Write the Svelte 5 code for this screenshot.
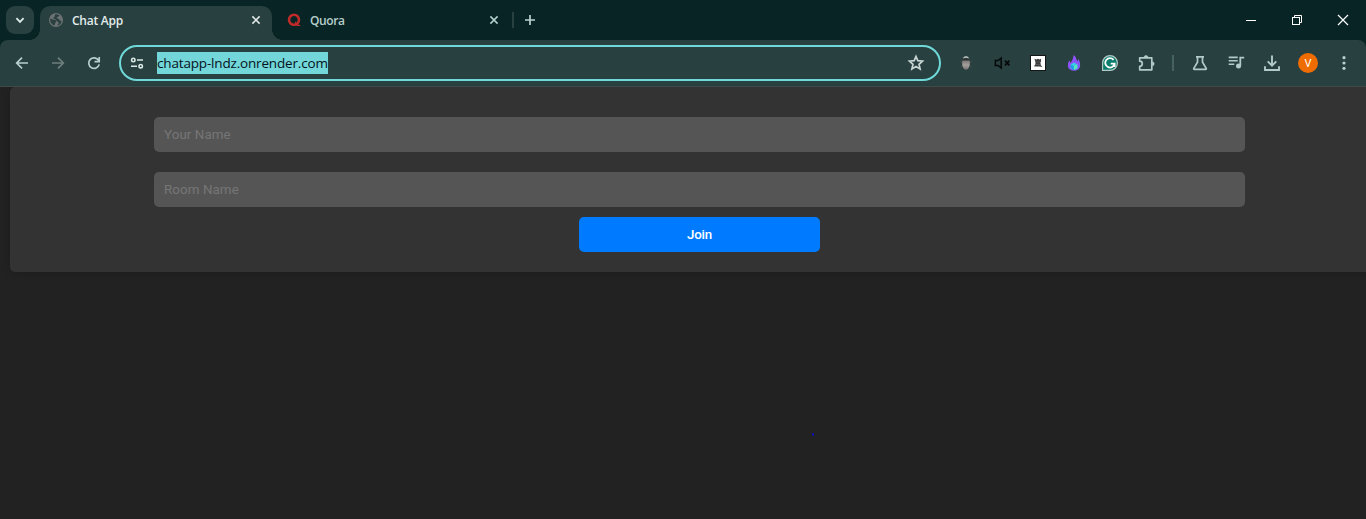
<script>
  const controls = ['min', 'restore', 'close'];
</script>

<div class="window">
  <div class="strip">
    <button class="search" aria-label="Search tabs">
      <svg viewBox="-14 -14 28 28" width="28" height="28"><path d="M-3.6 -1.8L0 1.8L3.6 -1.8" fill="none" stroke="#d9e9e7" stroke-width="1.9" /></svg>
    </button>
    <div class="tab active">
      <svg class="fav" viewBox="-8 -8 16 16" width="16" height="16">
        <circle r="7" fill="#6b7173" />
        <path d="M-5.7 -1.2C-3.8 -1.5 -3 0 -1.2 .1C.5 .2 .8 1.5 -.2 2.2C-1.1 2.9 -.7 4 -1.6 5.4C-4.4 4.8 -6.2 1.8 -5.7 -1.2ZM-1 -5.7C1 -6 2.6 -5.3 3.6 -4.5C2.8 -4.2 2.8 -3 1.4 -2.9C.1 -2.8 .7 -1.4 2 -1.3C3.3 -1.2 3.2 .4 4.2 .6C5 .8 5.3 1.3 5.5 1.7C4.8 4 3.3 5.2 1.4 5.6C1.6 4.4 3.2 3.9 2.6 2.5C2.1 1.4 1 1.3 .3 .2C-.5 -1 -2.1 -.6 -2.5 -1.7C-2.8 -2.8 -1.2 -3 -1.1 -4Z" fill="#2a4040" />
      </svg>
      <span class="title bold">Chat App</span>
      <svg class="x" viewBox="-8 -8 16 16" width="16" height="16"><path d="M-3.6 -3.6L3.6 3.6M3.6 -3.6L-3.6 3.6" stroke="#e3eceb" stroke-width="1.5" /></svg>
    </div>
    <div class="tab second">
      <svg class="fav" viewBox="-8 -8 16 16" width="16" height="16">
        <circle cx="0" cy="-.2" r="5" fill="none" stroke="#bd2b2b" stroke-width="2.6" />
        <path d="M1 1.2L3 3.2L4.5 4.8L6.2 4.7V6H3.2L1 4.4Z" fill="#bd2b2b" />
      </svg>
      <span class="title quora">Quora</span>
      <svg class="x" viewBox="-8 -8 16 16" width="16" height="16"><path d="M-3.6 -3.6L3.6 3.6M3.6 -3.6L-3.6 3.6" stroke="#b4cfcc" stroke-width="1.5" /></svg>
    </div>
    <i class="divider"></i>
    <svg class="plus" viewBox="-14 -14 28 28" width="28" height="28"><path d="M-5 0H5M0 -5V5" stroke="#b9d2cf" stroke-width="1.7" /></svg>
    <div class="controls">
      {#each controls as name}
        <svg viewBox="-23 -20 46 40" width="46" height="40" fill="none" stroke="#fff" stroke-width="1">
          {#if name === 'min'}
            <path d="M-5 .5H5" />
          {:else if name === 'restore'}
            <rect x="-4.5" y="-2.5" width="7" height="7" /><path d="M-2.5 -2.5V-4.5H4.5V2.5H2.5" />
          {:else}
            <path d="M-5 -5L5 5M5 -5L-5 5" stroke-width="1.2" />
          {/if}
        </svg>
      {/each}
    </div>
  </div>

  <div class="toolwrap">
    <div class="toolbar">
      <svg class="ic" viewBox="-18 -18 36 36"><path d="M6 0H-5M0 -5.3L-5.3 0L0 5.3" fill="none" stroke="#b5d0cd" stroke-width="1.7" /></svg>
      <svg class="ic" viewBox="-18 -18 36 36"><path d="M-6 0H5M0 -5.3L5.3 0L0 5.3" fill="none" stroke="#6e7f7d" stroke-width="1.7" /></svg>
      <svg class="ic" viewBox="-18 -18 36 36"><path d="M4.6 -2.6A5.3 5.3 0 1 0 5.2 1.4M5.2 -6V-1.3H.5" fill="none" stroke="#b5d0cd" stroke-width="1.7" /></svg>
      <div class="omnibox">
        <svg class="tune" viewBox="-8 -8 16 16" width="16" height="16" fill="none" stroke="#d9e7e5" stroke-width="1.6"><circle cx="-3.7" cy="-3" r="1.7" /><path d="M0 -3H6M-6 3.2H0" /><circle cx="3.7" cy="3.2" r="1.7" /></svg>
        <span class="url">chatapp-lndz.onrender.com</span>
        <svg class="star" viewBox="-10 -10 20 20" width="20" height="20"><path d="M0 -6.5L1.8 -2.3L6.5 -1.9L3 1.3L4.1 6L0 3.6L-4.1 6L-3 1.3L-6.5 -1.9L-1.8 -2.3Z" fill="none" stroke="#c8d5d3" stroke-width="1.7" /></svg>
      </div>
      <div class="extensions">
        <svg class="ic" viewBox="-18 -18 36 36">
          <defs><linearGradient id="bulb" x2="0" y2="1"><stop stop-color="#7b7574" /><stop offset=".5" stop-color="#a4a09e" /><stop offset="1" stop-color="#777170" /></linearGradient></defs>
          <path d="M-3 -4.4C-2.6 -7.7 2.6 -7.7 3 -4.4L1 -5.2H-1Z" fill="#d5d5d5" />
          <path d="M-3.8 -2.6H3.8V1C3.8 4 2 6.7 0 6.7C-2 6.7 -3.8 4 -3.8 1Z" fill="url(#bulb)" />
          <path d="M-3.2 -3.4H3.2" stroke="#393434" stroke-width="1.2" />
          <path d="M-5.8 -1.5L-4 0M-5.5 4L-4 3M5.8 -1.5L4 0M5.5 4L4 3" stroke="#594f4f" stroke-width=".7" />
        </svg>
        <svg class="ic" viewBox="-18 -18 36 36" fill="none" stroke="#050808" stroke-width="1.5"><path d="M-6.6 -2.4H-4L-.8 -5V5L-4 2.4H-6.6Z" /><path d="M3 -2.3L7.4 2.3M7.4 -2.3L3 2.3" stroke-width="1.7" /></svg>
        <svg class="ic" viewBox="-18 -18 36 36"><rect x="-7.5" y="-7.5" width="15" height="15" fill="#fff" stroke="#151515" /><path d="M-3.5 -4.2L-1.6 -3.6L0 -4.2L1.6 -3.6L3 -4.2V-1.4L2.4 -.6L2.8 2L4.4 4.2L2 3.6H-3.6V2.2L-2.6 1.4V-1Z" fill="#3e3e3e" /><path d="M-2 -1H2M-2 1.5H2" stroke="#666" stroke-width=".6" /></svg>
        <svg class="ic" viewBox="-18 -18 36 36">
          <defs><linearGradient id="flame" x2="1" y2="1"><stop stop-color="#9b4bff" /><stop offset="1" stop-color="#7a5cf5" /></linearGradient></defs>
          <path d="M-.5 -8C3 -5.5 2 -3 3.6 -1.7C4.1 -2.6 4.2 -3.4 4.2 -4.2C5.8 -2 6.3 .7 6.1 3C5.8 6 3.5 7.7 0 7.7C-3.7 7.7 -6.1 5.5 -6.1 2.5C-6.1 .3 -5.5 -1 -4.5 -2.5L-3.6 0C-1.6 -2.2 -.6 -5 -.5 -8Z" fill="url(#flame)" />
          <path d="M0 -.4L3.3 1.5V5.2L0 7.1L-3.3 5.2V1.5Z" fill="#3bcce0" /><path d="M0 3.3L3.3 1.5V5.2L0 7.1Z" fill="#55e8bf" /><path d="M0 3.3L-3.3 1.5V5.2L0 7.1Z" fill="#239de6" />
        </svg>
        <svg class="ic" viewBox="-18 -18 36 36"><path d="M-7.4 7.4V0A7.4 7.4 0 1 1 0 7.4Z" fill="#087d6b" stroke="#b2c9c5" stroke-width="1.2" /><path d="M3.6 -3.1A4.7 4.7 0 1 0 4.6 .7H.7M4.6 .7V4" fill="none" stroke="#fff" stroke-width="1.8" /></svg>
        <svg class="ic" viewBox="-18 -18 36 36"><path d="M-6.3 -5.2H5.8V6.8H-6.3V3.4A2.6 2.6 0 0 0 -6.3 -1.8Z" fill="none" stroke="#b0cbc8" stroke-width="1.7" stroke-linejoin="round" /><path d="M-2 -5.5A2 2 0 0 1 2 -5.5ZM6.2 -1.2A2 2 0 0 1 6.2 2.8Z" fill="#b0cbc8" stroke="#b0cbc8" stroke-width=".6" /></svg>
      </div>
      <div class="slot"><i class="divider bar"></i></div>
      <svg class="ic" viewBox="-18 -18 36 36" fill="none" stroke="#b0cbc8" stroke-width="1.7"><path d="M-4 -6.2H4M-2.5 -6V-.8L-6.2 5.4C-6.5 6 -6.2 6.3 -5.7 6.3H5.7C6.2 6.3 6.5 6 6.2 5.4L2.5 -.8V-6" /></svg>
      <svg class="ic" viewBox="-18 -18 36 36" fill="none" stroke="#b0cbc8" stroke-width="1.6"><path d="M-7.3 -5.6H1.7M-7.3 -2.2H1.7M-7.3 1.2H-1.7" /><path d="M4.3 3V-5.4H8.2" stroke-width="1.8" /><circle cx="2.5" cy="3" r="2.5" fill="#b0cbc8" stroke="none" /></svg>
      <svg class="ic" viewBox="-18 -18 36 36" fill="none" stroke="#b0cbc8" stroke-width="1.9"><path d="M0 -7.5V3M-4.3 -1.6L0 2.7L4.3 -1.6M-7 3.3V7H7V3.3" /></svg>
      <div class="account"><span>V</span></div>
      <svg class="ic" viewBox="-18 -18 36 36" fill="#b5d0cd"><circle cy="-5.3" r="1.6" /><circle cy="0" r="1.6" /><circle cy="5.3" r="1.6" /></svg>
    </div>
  </div>

  <main>
    <form class="card" onsubmit={(e) => e.preventDefault()}>
      <input placeholder="Your Name" />
      <input placeholder="Room Name" />
      <button class="join">Join</button>
    </form>
    <i class="speck"></i>
  </main>
</div>

<style>
  :global(body) { margin: 0; background: #222; overflow: hidden; }
  .window { width: 1366px; height: 519px; overflow: hidden; display: flex; flex-direction: column; font-family: "Open Sans", "Noto Sans", sans-serif; }
  svg { display: block; flex: none; }
  .strip { height: 40px; background: #092424; display: flex; align-items: center; box-sizing: border-box; padding-left: 6px; flex: none; }
  .search { width: 28px; height: 28px; padding: 0; border: 0; border-radius: 9px; background: #284040; flex: none; }
  .tab { display: flex; align-items: center; box-sizing: border-box; height: 34px; align-self: flex-end; padding-bottom: 6px; flex: none; }
  .active { width: 232px; margin-left: 6px; padding-left: 8px; padding-right: 8px; background: #284040; border-radius: 10px 10px 0 0; position: relative; }
  .active::before, .active::after { content: ""; position: absolute; bottom: 0; width: 10px; height: 10px; }
  .active::before { left: -10px; background: radial-gradient(circle at 0 0, transparent 9.5px, #284040 10px); }
  .active::after { right: -10px; background: radial-gradient(circle at 100% 0, transparent 9.5px, #284040 10px); }
  .second { width: 240px; padding-left: 14px; padding-right: 10px; }
  .title { font-size: 12px; line-height: 16px; margin-left: 8px; padding-top: 2px; flex: 1; white-space: nowrap; font-weight: 600; }
  .bold { color: #e2eceb; letter-spacing: -0.25px; }
  .quora { color: #b7cfcc; letter-spacing: -0.4px; }
  .divider { width: 2px; height: 16px; background: #284040; flex: none; }
  .plus { margin-left: 2px; }
  .controls { display: flex; margin-left: auto; }
  .toolwrap { background: #092424; flex: none; }
  .toolbar { height: 47px; box-sizing: border-box; border-bottom: 1px solid #3d4a4a; background: #284040; border-radius: 8px 8px 0 0; display: flex; align-items: center; padding-left: 4px; }
  .ic { width: 36px; height: 36px; }
  .omnibox { width: 822px; height: 36px; margin: 0 7px; box-sizing: border-box; border: 2px solid #70d8d8; border-radius: 18px; display: flex; align-items: center; padding-left: 8px; padding-right: 13px; flex: none; }
  .url { margin-left: 12px; width: 171px; height: 22px; line-height: 22px; background: #73d6d8; color: #04121c; font-size: 13.5px; letter-spacing: -0.17px; white-space: nowrap; }
  .star { margin-left: auto; }
  .extensions { display: flex; }
  .slot { width: 18px; display: flex; justify-content: center; }
  .bar { background: #456160; }
  .account { width: 36px; display: flex; justify-content: center; }
  .account span { width: 20px; height: 20px; border-radius: 50%; background: #ef6c00; color: #fff; font: 11px/21px Roboto, sans-serif; text-align: center; }
  main { flex: 1; background: #222; position: relative; overflow: hidden; }
  .card { width: 1379px; height: 185px; margin-left: 10px; box-sizing: border-box; padding-top: 30px; background: #333; border-radius: 5px; box-shadow: 0 0 10px rgba(0, 0, 0, .2); display: flex; flex-direction: column; align-items: center; }
  input { width: 1091px; height: 35px; box-sizing: border-box; border: 0; border-radius: 5px; background: #555; padding: 10px; margin: 0 0 20px; font: 13.333px Roboto, sans-serif; letter-spacing: .1px; color: #fff; flex: none; }
  input + input { margin-bottom: 10px; }
  input::placeholder { color: #757575; opacity: 1; }
  .join { width: 241px; height: 35px; border: 0; padding: 0; border-radius: 5px; background: #007bff; color: #fff; font: 500 13.333px Roboto, sans-serif; letter-spacing: -.2px; }
  .speck { position: absolute; left: 812px; top: 346px; width: 2px; height: 3px; background: #1010b8; border-radius: 1px; }
</style>
